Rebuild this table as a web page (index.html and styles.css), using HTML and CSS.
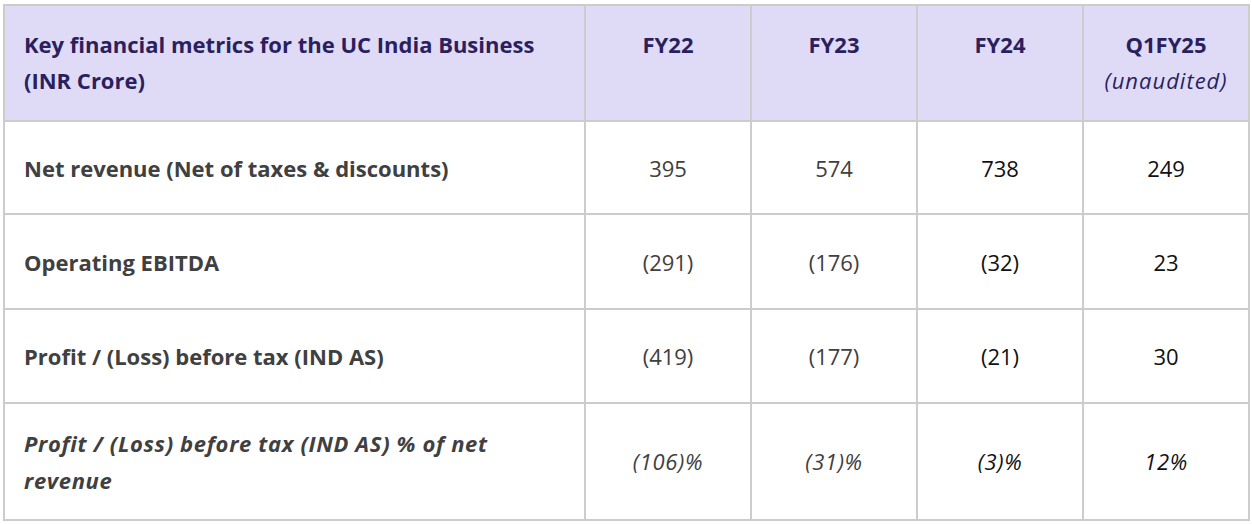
FILE: index.html
```html
<!DOCTYPE html>
<html lang="en">
<head>
<meta charset="utf-8">
<title>Key financial metrics</title>
<link rel="stylesheet" href="styles.css">
</head>
<body>
<table class="metrics">
  <colgroup>
    <col class="c-label">
    <col class="c-num">
    <col class="c-num">
    <col class="c-num">
    <col class="c-num">
  </colgroup>
  <thead>
    <tr class="head">
      <th class="label">Key financial metrics for the UC India Business<br>(INR Crore)</th>
      <th>FY22</th>
      <th>FY23</th>
      <th>FY24</th>
      <th>Q1FY25<br><span class="sub">(unaudited)</span></th>
    </tr>
  </thead>
  <tbody>
    <tr class="r1">
      <td class="label">Net revenue (Net of taxes &amp; discounts)</td>
      <td class="old">395</td>
      <td class="old">574</td>
      <td class="new">738</td>
      <td class="new">249</td>
    </tr>
    <tr class="r2">
      <td class="label">Operating EBITDA</td>
      <td class="old">(291)</td>
      <td class="old">(176)</td>
      <td class="new">(32)</td>
      <td class="new">23</td>
    </tr>
    <tr class="r3">
      <td class="label">Profit / (Loss) before tax (IND AS)</td>
      <td class="old">(419)</td>
      <td class="old">(177)</td>
      <td class="new">(21)</td>
      <td class="new">30</td>
    </tr>
    <tr class="r4 pct">
      <td class="label">Profit / (Loss) before tax (IND AS) % of net<br>revenue</td>
      <td class="old">(106)%</td>
      <td class="old">(31)%</td>
      <td class="new">(3)%</td>
      <td class="new">12%</td>
    </tr>
  </tbody>
</table>
</body>
</html>
```

FILE: styles.css
```css
html, body {
  margin: 0;
  padding: 0;
  background: #ffffff;
}

body {
  padding: 4px 0 0 3px;
  font-family: "Open Sans", "Liberation Sans", sans-serif;
  font-size: 22px;
}

.metrics {
  border-collapse: collapse;
  width: 1247px;
  table-layout: fixed;
}

.c-label { width: 581px; }
.c-num { width: 166px; }

.metrics th,
.metrics td {
  border: 2px solid #cccccc;
  line-height: 36px;
  text-align: center;
  padding: 0 19px;
  white-space: nowrap;
}

.metrics th {
  background: #dfdbf7;
  color: #2b1f5e;
  font-weight: 700;
  vertical-align: top;
  padding-top: 20px;
  padding-bottom: 22px;
}

.metrics .sub {
  font-weight: 400;
  font-style: italic;
  letter-spacing: 1px;
}

.metrics .label {
  text-align: left;
}

.metrics td {
  vertical-align: middle;
}

.metrics td.label {
  font-weight: 700;
  color: #404040;
}

.metrics td.old { color: #404040; }
.metrics td.new { color: #111111; }

.r1 { height: 93px; }
.r2 { height: 95px; }
.r3 { height: 94px; }
.r4 { height: 117px; }

.pct td {
  font-style: italic;
  line-height: 37px;
  letter-spacing: 0.65px;
}
```
